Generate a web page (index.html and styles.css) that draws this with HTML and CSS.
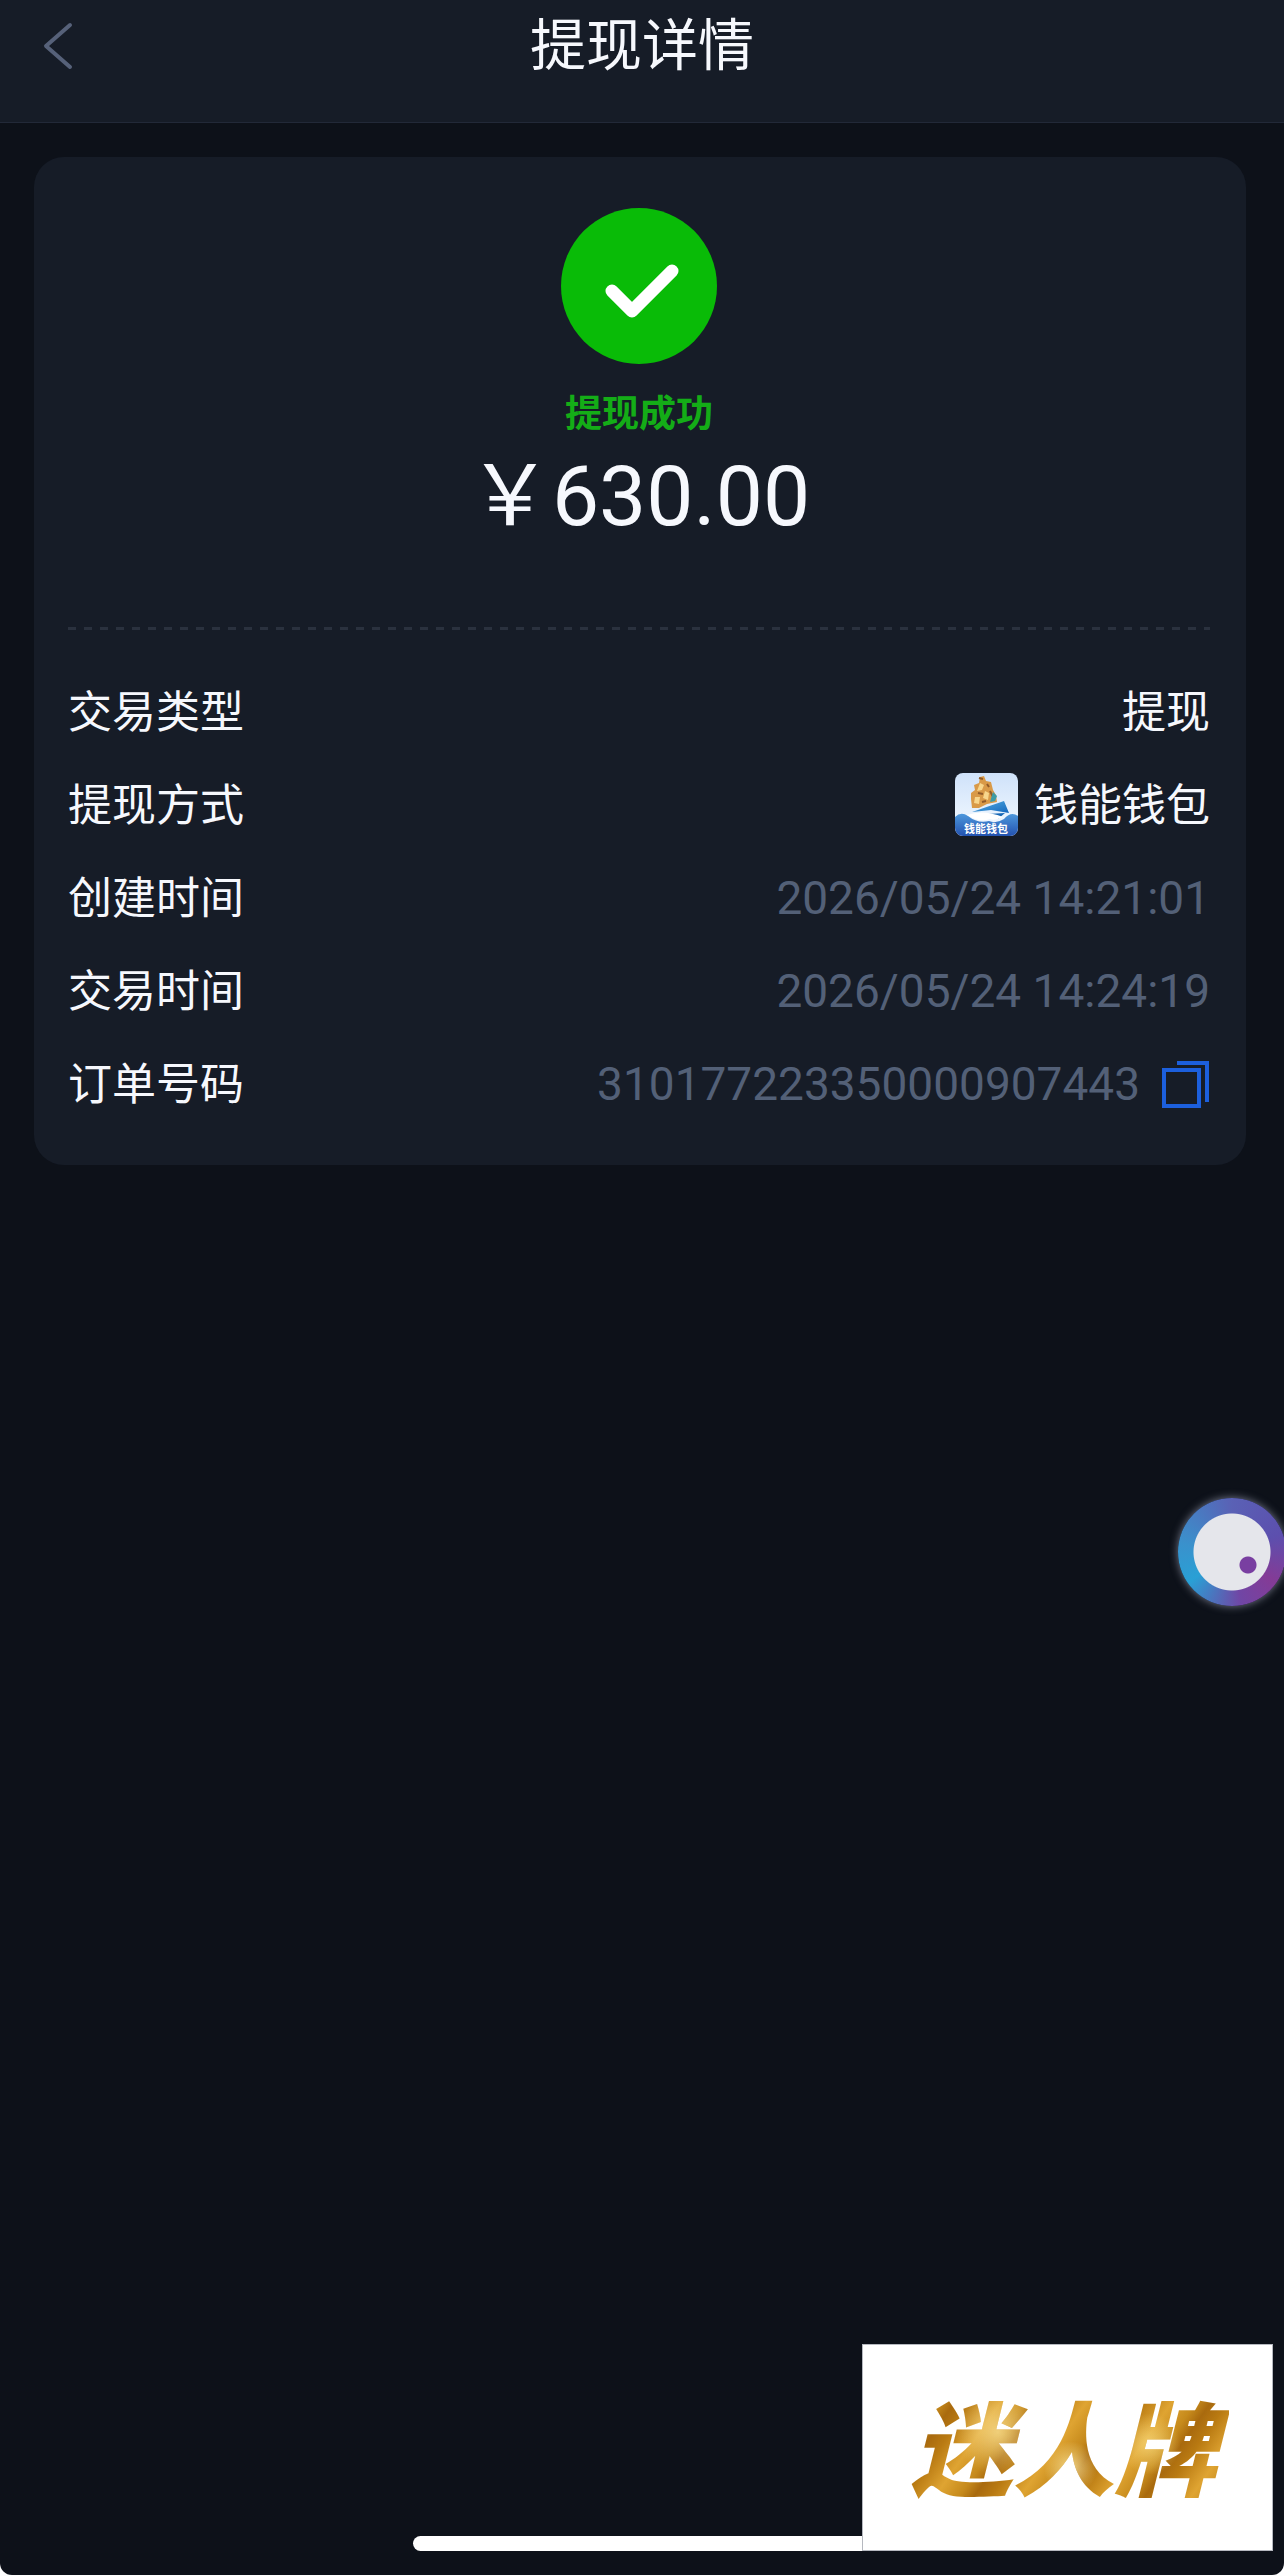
FILE: index.html
```
<!DOCTYPE html>
<html lang="zh-CN">
<head>
  <meta charset="UTF-8">
  <meta name="viewport" content="width=device-width, initial-scale=1">
  <title>提现详情</title>
  <link rel="stylesheet" href="styles.css">
</head>

<body>
  <div class="pantalla">

    <header class="cabecera">
      <button class="volver" aria-label="返回">
        <svg width="32" height="48" viewBox="0 0 32 48" fill="none" stroke="#566179" stroke-width="4" stroke-linecap="round" stroke-linejoin="round">
          <path d="M28 3 L4 24 L28 45"/>
        </svg>
      </button>
      <h1>提现详情</h1>
    </header>

    <main class="tarjeta">
      <section class="estado">
        <svg width="156" height="156" viewBox="0 0 156 156">
          <circle cx="78" cy="78" r="78" fill="#09bb07"/>
          <path d="M51 83 L71 103 L111 63" fill="none" stroke="#fff" stroke-width="13" stroke-linecap="round" stroke-linejoin="round"/>
        </svg>
        <p class="resultado">提现成功</p>
        <p class="importe">￥630.00</p>
      </section>

      <div class="separador"></div>

      <dl class="datos">
        <div class="fila">
          <dt>交易类型</dt>
          <dd>提现</dd>
        </div>
        <div class="fila">
          <dt>提现方式</dt>
          <dd>
            <svg class="monedero" width="63" height="63" viewBox="0 0 63 63">
              <defs>
                <linearGradient id="cielo" x1="0" y1="0" x2="0" y2="1">
                  <stop offset="0" stop-color="#cfe2fa"/>
                  <stop offset="1" stop-color="#f6fbff"/>
                </linearGradient>
                <linearGradient id="mar" x1="0" y1="0" x2="0" y2="1">
                  <stop offset="0" stop-color="#4d98dc"/>
                  <stop offset="1" stop-color="#2352b0"/>
                </linearGradient>
                <linearGradient id="vela" x1="0" y1="0" x2="1" y2="1">
                  <stop offset="0" stop-color="#55b1e3"/>
                  <stop offset="1" stop-color="#1466bd"/>
                </linearGradient>
              </defs>
              <rect width="63" height="63" fill="url(#cielo)"/>
              <path d="M25 4 L29 3 L31 8 L36 9 L38 17 L41 22 L42 29 L32 31 L24 35 L17 35 L16 26 L16 20 L20 17 L19 12 L24 10Z" fill="#d99a48"/>
              <path d="M25 10 L29 12 L27 17 L22 18Z M30 18 L34 20 L33 27 L28 25Z M20 24 L25 24 L24 31 L19 30Z" fill="#f8d68c"/>
              <path d="M24 5 L28 6 M32 11 L34 14 M23 20 L28 21 M27 29 L31 28 M35 18 L38 24" stroke="#915b29" stroke-width="2"/>
              <path d="M38 19 L42 23 L40 28 L35 29Z" fill="#3e9ba5"/>
              <path d="M17 39 L49 28 L54 40 L36 37Z" fill="url(#vela)"/>
              <path d="M32 41 L50 40 L43 46 L40 43Z" fill="#1767b5"/>
              <path d="M0 44 Q6 38 13 43 Q23 51 34 48 Q41 51 49 46 Q56 38 63 43 V63 H0Z" fill="url(#mar)"/>
              <path d="M12 42 Q28 36 48 44 Q40 48 35 46 Q24 50 12 42Z" fill="#fff"/>
              <text x="31" y="60" text-anchor="middle" class="rotulo">钱能钱包</text>
            </svg>
            钱能钱包
          </dd>
        </div>
        <div class="fila">
          <dt>创建时间</dt>
          <dd class="gris">2026/05/24 14:21:01</dd>
        </div>
        <div class="fila">
          <dt>交易时间</dt>
          <dd class="gris">2026/05/24 14:24:19</dd>
        </div>
        <div class="fila">
          <dt>订单号码</dt>
          <dd class="gris pedido">
            <span id="numero">310177223350000907443</span>
            <button class="copiar" aria-label="复制" onclick="copiarNumero()">
              <svg width="48" height="48" viewBox="0 0 48 48" fill="none" stroke="#1c5fdd" stroke-width="4">
                <rect x="2" y="10" width="35" height="36"/>
                <path d="M15 3 H45 V42"/>
              </svg>
            </button>
          </dd>
        </div>
      </dl>
    </main>

    <button class="flotante" aria-label="助手"></button>

    <div class="barra"></div>

    <div class="marca"><span>迷人牌</span></div>
  </div>

  <script>
    function copiarNumero() {
      const numero = document.getElementById('numero').textContent;
      navigator.clipboard.writeText(numero);
    }
  </script>
</body>
</html>
```
FILE: styles.css
```
* {
  box-sizing: border-box;
}

html {
  background: #fff;
}

body {
  margin: 0;
  font-family: Roboto, "Noto Sans CJK SC", sans-serif;
  color: #f6f8fd;
}

h1, p, dl, dd {
  margin: 0;
}

button {
  padding: 0;
  border: none;
  background: none;
  cursor: pointer;
}

svg {
  display: block;
}

.pantalla {
  position: relative;
  min-height: 100vh;
  overflow: hidden;
  background: #0d1119;
  border-radius: 0 0 12px 12px;
}

/* cabecera */
.cabecera {
  display: grid;
  grid-template-columns: 32px 1fr 32px;
  align-items: center;
  padding: 0 42px 30px;
  background: #161c27;
  border-bottom: 1px solid #222938;
}

.cabecera h1 {
  font-size: 56px;
  font-weight: 400;
  line-height: 92px;
  text-align: center;
}

/* tarjeta */
.tarjeta {
  margin: 34px 38px 0 34px;
  padding: 51px 36px 51px 34px;
  background: #161c27;
  border-radius: 30px;
}

.estado {
  display: flex;
  flex-direction: column;
  align-items: center;
}

.resultado {
  margin-top: 25px;
  font-size: 37px;
  font-weight: 700;
  line-height: 52px;
  color: #14ad17;
}

.importe {
  font-size: 84px;
  line-height: 112px;
}

.separador {
  height: 3px;
  margin-top: 74px;
  background: repeating-linear-gradient(90deg, #2a313e 0 8px, transparent 8px 16px);
}

.datos {
  display: grid;
  gap: 30px;
  margin-top: 49px;
}

.fila {
  display: flex;
  justify-content: space-between;
  align-items: center;
  height: 63px;
  padding-bottom: 4px;
  font-size: 44px;
}

.fila dd {
  display: flex;
  align-items: center;
  gap: 16px;
}

.fila .gris {
  padding-top: 6px;
  font-size: 46px;
  color: #536077;
}

.fila .pedido {
  gap: 22px;
}

.monedero {
  margin-top: 6px;
  border-radius: 8px;
}

.rotulo {
  font-size: 11px;
  font-weight: 700;
  fill: #fff;
}

/* boton flotante */
.flotante {
  position: absolute;
  top: 1498px;
  right: -2px;
  width: 108px;
  height: 108px;
  border-radius: 50%;
  background:
    radial-gradient(circle at 70px 67px, #793fa1 8px, transparent 9px),
    radial-gradient(circle, #e5e6eb 38px, transparent 39px),
    conic-gradient(#5a61b5, #5c4fae 70deg, #843b96 125deg, #7046a5 170deg, #29a0d5 235deg, #3a91cc 280deg, #5a61b5);
  box-shadow: 0 0 8px #777b8c;
}

.barra {
  position: absolute;
  left: 50%;
  bottom: 24px;
  width: 458px;
  height: 15px;
  margin-left: -229px;
  background: #fff;
  border-radius: 8px;
}

.marca {
  position: absolute;
  right: 11px;
  bottom: 24px;
  display: flex;
  justify-content: center;
  align-items: center;
  width: 411px;
  height: 207px;
  padding: 0 8px 8px 0;
  background: #fff;
  border: 1px solid #b5b8bf;
}

.marca span {
  padding: 0 12px;
  font-family: "Noto Sans CJK SC", sans-serif;
  font-size: 102px;
  font-weight: 900;
  font-style: italic;
  line-height: 120px;
  color: transparent;
  background:
    radial-gradient(circle at 30% 40%, rgba(255, 233, 160, 0.7), transparent 18%),
    radial-gradient(circle at 52% 70%, rgba(255, 233, 160, 0.8), transparent 14%),
    radial-gradient(circle at 76% 50%, rgba(250, 222, 130, 0.7), transparent 12%),
    repeating-linear-gradient(125deg, #b97a12 0, #dfa432 24px, #c68a1c 44px, #a96a0e 56px, #b97a12 70px);
  background-clip: text;
  -webkit-background-clip: text;
}
```
